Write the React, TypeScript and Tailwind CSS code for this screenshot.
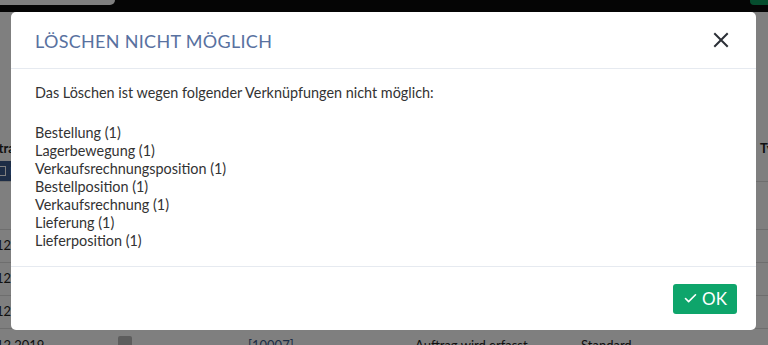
import React from "react";

const items = [
  "Bestellung (1)",
  "Lagerbewegung (1)",
  "Verkaufsrechnungsposition (1)",
  "Bestellposition (1)",
  "Verkaufsrechnung (1)",
  "Lieferung (1)",
  "Lieferposition (1)",
];

function Page() {
  return (
    <div className="w-[768px] h-[345px] overflow-hidden bg-white flex flex-col" style={{ fontFamily: "Lato, 'Liberation Sans', sans-serif" }}>
      <div className="h-[12px] bg-[#0a0a0a] flex justify-between items-start shrink-0">
        <div className="w-[115px] h-[5px] bg-white rounded-br-[6px]" />
        <div className="w-[18px] h-[5px] bg-[#0b9a5c] rounded-bl-[4px]" />
      </div>
      <div className="h-[126px] shrink-0" />
      <div className="h-[22px] flex items-center justify-between text-[13px] font-bold text-[#222] shrink-0">
        <span className="ml-[-22px]">Auftrag</span>
        <span className="mr-[-20px]">Type</span>
      </div>
      <div className="h-[22px] flex items-center justify-between border-b border-[#ddd] shrink-0">
        <div className="ml-[-8px] h-[20px] px-[6px] bg-[#3b5b8c] text-white text-[12px] flex items-center gap-1 rounded-[3px]">
          <span className="w-[8px] h-[10px] border border-white inline-block" />
          <span>Bearbeiten</span>
        </div>
      </div>
      <div className="h-[48px] border-b border-[#ddd] shrink-0" />
      <div className="h-[33px] border-b border-[#ddd] flex items-center text-[13px] text-[#222] shrink-0">
        <span className="ml-[-4px]">12.2019</span>
      </div>
      <div className="h-[33px] border-b border-[#ddd] flex items-center text-[13px] text-[#222] shrink-0">
        <span className="ml-[-4px]">12.2019</span>
      </div>
      <div className="h-[33px] border-b border-[#ddd] flex items-center text-[13px] text-[#222] shrink-0">
        <span className="ml-[-4px]">12.2019</span>
      </div>
      <div className="h-[33px] flex items-start pt-[7px] text-[13px] text-[#222] shrink-0">
        <span className="ml-[-4px] w-[122px] shrink-0">12.2019</span>
        <span className="w-[14px] h-[18px] bg-[#bbb] rounded-[2px] mr-[116px] shrink-0" />
        <span className="text-[#3b5b8c] w-[167px] shrink-0">[10007]</span>
        <span className="w-[166px] shrink-0">Auftrag wird erfasst</span>
        <span className="shrink-0">Standard</span>
      </div>
    </div>
  );
}

export default function App() {
  return (
    <div className="relative w-[768px] h-[345px] overflow-hidden">
      <Page />
      <div className="absolute inset-0 bg-black/50" />
      <div
        className="absolute left-[11px] top-[12px] w-[745px] h-[318px] bg-white rounded-[5px] flex flex-col"
        style={{ fontFamily: "Lato, 'Liberation Sans', sans-serif" }}
      >
        <div className="h-[57px] border-b border-[#e6eaf0] pl-[24px] pr-[27px] flex items-center justify-between shrink-0">
          <h1 className="text-[18px] text-[#5871a0] tracking-[0.3px] leading-none pt-[2px]">LÖSCHEN NICHT MÖGLICH</h1>
          <svg width="16" height="16" viewBox="0 0 16 16" fill="none" stroke="#2b2f36" strokeWidth="2" strokeLinecap="square">
            <path d="M2 2L14 14M14 2L2 14" />
          </svg>
        </div>
        <div className="flex-1 pl-[24px] pt-[15px] text-[14.4px] leading-[18px] text-[#333]">
          <p className="mb-[22px]">Das Löschen ist wegen folgender Verknüpfungen nicht möglich:</p>
          {items.map((t) => (
            <div key={t}>{t}</div>
          ))}
        </div>
        <div className="h-[64px] border-t border-[#e6eaf0] flex items-center justify-end pr-[19px] shrink-0">
          <button className="w-[64px] h-[30px] bg-[#0ea56b] rounded-[3px] text-white text-[17px] flex items-center justify-center gap-[4px]">
            <svg width="15" height="15" viewBox="0 0 24 24" fill="none" stroke="white" strokeWidth="2.6" strokeLinecap="round" strokeLinejoin="round">
              <path d="M20 6 9 17l-5-5" />
            </svg>
            <span>OK</span>
          </button>
        </div>
      </div>
    </div>
  );
}
